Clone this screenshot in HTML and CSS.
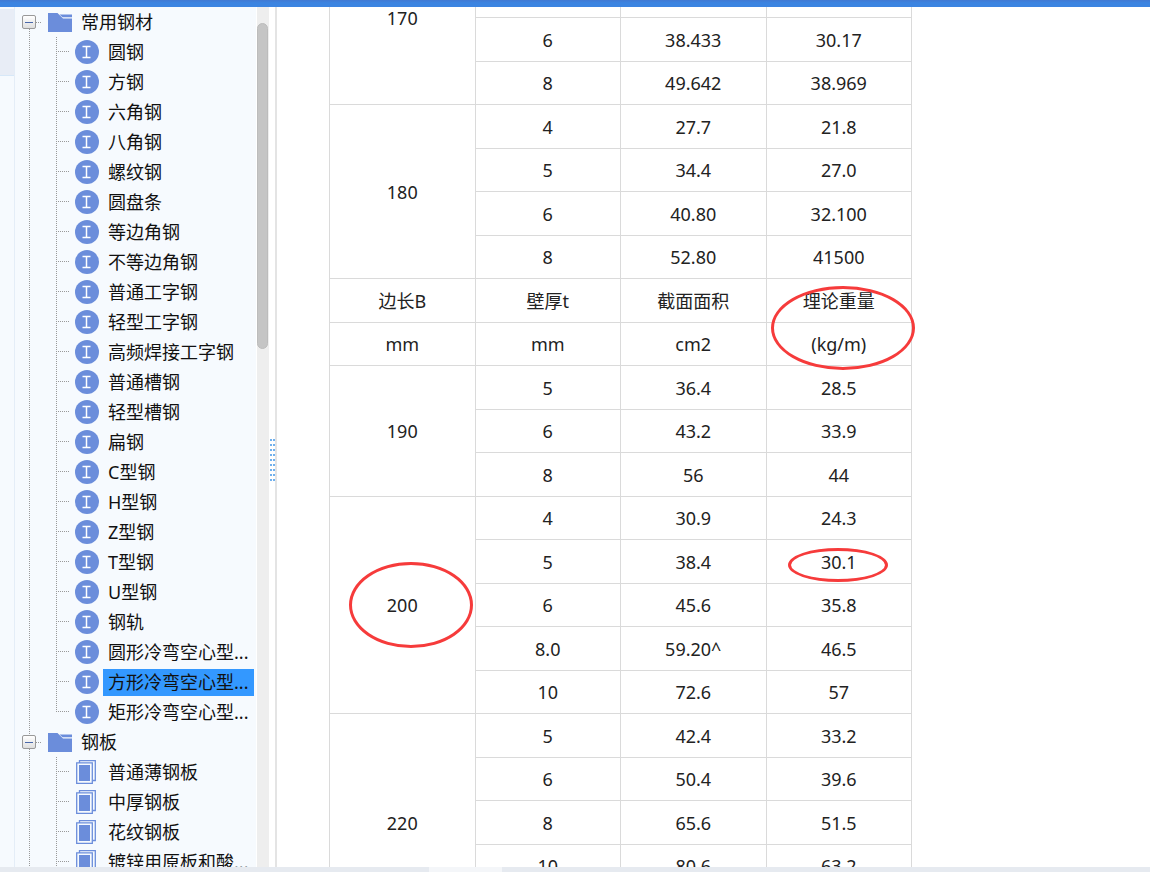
FILE: index.html
```html
<!DOCTYPE html>
<html lang="zh-CN">
<head>
<meta charset="utf-8">
<title>常用钢材</title>
<link rel="stylesheet" href="styles.css">
</head>
<body>
<svg class="defs" aria-hidden="true">
  <symbol id="folder" viewBox="0 0 24 19"><path fill="#6b8ddb" d="M0 0h9.500l5.500 5.500h9V19H0z"/><path fill="#6b8ddb" d="M11.500 1.500H24v2.700h-9.500z"/></symbol>
  <symbol id="beam" viewBox="0 0 24 24"><circle cx="12" cy="12" r="12" fill="#6b8ddb"/><path fill="none" stroke="#fff" stroke-width="1.500" d="M7.500 6.500h8M7.500 17.500h8M11.500 6.500v11"/></symbol>
  <symbol id="plate" viewBox="0 0 24 24"><path fill="none" stroke="#6b8ddb" stroke-width="1.300" d="M4.500 2.500V.7h15.800v19.800H18M1.700 2.800h15.600v20.500H1.700z"/><path fill="#6b8ddb" d="M4 5h11v16H4z"/></symbol>
</svg>
<div class="app">
  <header class="topbar"></header>
  <div class="workspace">
    <aside class="rail"><div class="rail-tab"></div></aside>
    <nav class="tree" aria-label="材料目录">
      <ul class="roots">
        <li class="root">
          <div class="root-row"><button class="toggle" type="button" aria-label="折叠常用钢材"></button><svg class="folder"><use href="#folder"/></svg><span>常用钢材</span></div>
          <ul class="children">
            <li><svg class="icon"><use href="#beam"/></svg><a href="#">圆钢</a></li>
            <li><svg class="icon"><use href="#beam"/></svg><a href="#">方钢</a></li>
            <li><svg class="icon"><use href="#beam"/></svg><a href="#">六角钢</a></li>
            <li><svg class="icon"><use href="#beam"/></svg><a href="#">八角钢</a></li>
            <li><svg class="icon"><use href="#beam"/></svg><a href="#">螺纹钢</a></li>
            <li><svg class="icon"><use href="#beam"/></svg><a href="#">圆盘条</a></li>
            <li><svg class="icon"><use href="#beam"/></svg><a href="#">等边角钢</a></li>
            <li><svg class="icon"><use href="#beam"/></svg><a href="#">不等边角钢</a></li>
            <li><svg class="icon"><use href="#beam"/></svg><a href="#">普通工字钢</a></li>
            <li><svg class="icon"><use href="#beam"/></svg><a href="#">轻型工字钢</a></li>
            <li><svg class="icon"><use href="#beam"/></svg><a href="#">高频焊接工字钢</a></li>
            <li><svg class="icon"><use href="#beam"/></svg><a href="#">普通槽钢</a></li>
            <li><svg class="icon"><use href="#beam"/></svg><a href="#">轻型槽钢</a></li>
            <li><svg class="icon"><use href="#beam"/></svg><a href="#">扁钢</a></li>
            <li><svg class="icon"><use href="#beam"/></svg><a href="#">C型钢</a></li>
            <li><svg class="icon"><use href="#beam"/></svg><a href="#">H型钢</a></li>
            <li><svg class="icon"><use href="#beam"/></svg><a href="#">Z型钢</a></li>
            <li><svg class="icon"><use href="#beam"/></svg><a href="#">T型钢</a></li>
            <li><svg class="icon"><use href="#beam"/></svg><a href="#">U型钢</a></li>
            <li><svg class="icon"><use href="#beam"/></svg><a href="#">钢轨</a></li>
            <li><svg class="icon"><use href="#beam"/></svg><a href="#">圆形冷弯空心型...</a></li>
            <li><svg class="icon"><use href="#beam"/></svg><a href="#" class="selected" aria-current="true">方形冷弯空心型...</a></li>
            <li><svg class="icon"><use href="#beam"/></svg><a href="#">矩形冷弯空心型...</a></li>
          </ul>
        </li>
        <li class="root">
          <div class="root-row"><button class="toggle" type="button" aria-label="折叠钢板"></button><svg class="folder"><use href="#folder"/></svg><span>钢板</span></div>
          <ul class="children">
            <li><svg class="icon"><use href="#plate"/></svg><a href="#">普通薄钢板</a></li>
            <li><svg class="icon"><use href="#plate"/></svg><a href="#">中厚钢板</a></li>
            <li><svg class="icon"><use href="#plate"/></svg><a href="#">花纹钢板</a></li>
            <li><svg class="icon"><use href="#plate"/></svg><a href="#">镀锌用原板和酸...</a></li>
          </ul>
        </li>
      </ul>
    </nav>
    <div class="scrollbar"><div class="thumb"></div></div>
    <div class="splitter"><div class="grip"></div></div>
    <main class="content">
      <div class="sheet">
        <table>
          <tbody>
            <tr><td rowspan="4">170</td><td></td><td></td><td></td></tr>
            <tr><td></td><td></td><td></td></tr>
            <tr><td>6</td><td>38.433</td><td>30.17</td></tr>
            <tr><td>8</td><td>49.642</td><td>38.969</td></tr>
            <tr><td rowspan="4">180</td><td>4</td><td>27.7</td><td>21.8</td></tr>
            <tr><td>5</td><td>34.4</td><td>27.0</td></tr>
            <tr><td>6</td><td>40.80</td><td>32.100</td></tr>
            <tr><td>8</td><td>52.80</td><td>41500</td></tr>
            <tr><th>边长B</th><th>壁厚t</th><th>截面面积</th><th>理论重量</th></tr>
            <tr><th>mm</th><th>mm</th><th>cm2</th><th>(kg/m)</th></tr>
            <tr><td rowspan="3">190</td><td>5</td><td>36.4</td><td>28.5</td></tr>
            <tr><td>6</td><td>43.2</td><td>33.9</td></tr>
            <tr><td>8</td><td>56</td><td>44</td></tr>
            <tr><td rowspan="5">200</td><td>4</td><td>30.9</td><td>24.3</td></tr>
            <tr><td>5</td><td>38.4</td><td>30.1</td></tr>
            <tr><td>6</td><td>45.6</td><td>35.8</td></tr>
            <tr><td>8.0</td><td>59.20^</td><td>46.5</td></tr>
            <tr><td>10</td><td>72.6</td><td>57</td></tr>
            <tr><td rowspan="5">220</td><td>5</td><td>42.4</td><td>33.2</td></tr>
            <tr><td>6</td><td>50.4</td><td>39.6</td></tr>
            <tr><td>8</td><td>65.6</td><td>51.5</td></tr>
            <tr><td>10</td><td>80.6</td><td>63.2</td></tr>
            <tr><td></td><td></td><td></td></tr>
          </tbody>
        </table>
        <div class="mark mark-weight"></div>
        <div class="mark mark-value"></div>
        <div class="mark mark-side"></div>
      </div>
    </main>
  </div>
  <footer class="bottombar"><div class="bottom-tab"></div></footer>
</div>
</body>
</html>
```

FILE: styles.css
```css
* { box-sizing: border-box; }
body {
  margin: 0;
  background: #fff;
  color: #222;
  font: 18px/24px "Noto Sans", "Noto Sans CJK SC", sans-serif;
}
ul { list-style: none; margin: 0; padding: 0; }
.defs { position: absolute; width: 0; height: 0; }
.app { display: flex; flex-direction: column; height: 100vh; overflow: hidden; }
.topbar { flex: none; height: 7px; background: linear-gradient(#4179d2, #3b84e1 3px); }
.workspace { flex: 1; min-height: 0; display: flex; overflow: hidden; }

.rail { flex: none; width: 15px; padding-top: 2px; background: #f6fafe; border-right: 1px solid #e4edf7; }
.rail-tab { height: 67px; background: #e8edf6; border-bottom: 1px solid #d7e8f8; }

.tree { flex: none; width: 241px; overflow: hidden; background: #f6fafe; color: #111; }
.root-row { display: flex; align-items: center; height: 30px; padding-left: 7px; }
.toggle {
  flex: none;
  width: 14px;
  height: 14px;
  padding: 0;
  border: 1px solid #999;
  border-radius: 2px;
  background: linear-gradient(#4a68aa, #4a68aa) center / 8px 1px no-repeat, linear-gradient(#fff, #dedede);
}
.root-row::after {
  content: "";
  order: 1;
  width: 6px;
  height: 1px;
  background: repeating-linear-gradient(90deg, #999 0 1px, transparent 1px 2px);
}
.folder { order: 2; flex: none; width: 24px; height: 19px; margin-left: 6px; }
.root-row span { order: 3; margin-left: 9px; }
.root { background: repeating-linear-gradient(#999 0 1px, transparent 1px 2px) 14px 0 / 1px 100% no-repeat; }
.root:first-child { background-position: 14px 22px; }
.children { padding-left: 41px; }
.children li {
  display: flex;
  align-items: center;
  height: 30px;
  background:
    repeating-linear-gradient(#999 0 1px, transparent 1px 2px) 0 0 / 1px 100% no-repeat,
    repeating-linear-gradient(90deg, #999 0 1px, transparent 1px 2px) 0 14px / 14px 1px no-repeat;
}
.root:first-child .children li:last-child { background-size: 1px 15px, 14px 1px; }
.icon { flex: none; width: 24px; height: 24px; margin-left: 19px; }
.children a {
  margin-left: 4px;
  padding: 0 5px;
  width: 151px;
  height: 27px;
  line-height: 27px;
  white-space: nowrap;
  color: inherit;
  text-decoration: none;
}
.children .selected { background: #3398ff; }

.scrollbar { flex: none; width: 13px; padding: 16px 1px 0 0; background: #eee; border-left: 1px solid #fff; }
.thumb { height: 326px; border-radius: 6px; background: #c5c5c5; border: 1px solid #bcbcbc; }
.splitter { flex: none; width: 8px; display: flex; align-items: center; border-right: 2px solid #e4e4e4; padding-top: 48px; }
.grip {
  width: 6px;
  height: 44px;
  background:
    repeating-linear-gradient(transparent 0 2px, #fff 2px 5px),
    repeating-linear-gradient(90deg, #fff 0 1px, #72b1ed 1px 3px);
}

.content { flex: 1; min-width: 0; overflow: hidden; padding-left: 52px; }
.sheet { position: relative; width: 583px; margin-top: -77px; }
table { width: 100%; table-layout: fixed; border-collapse: collapse; }
tr { height: 44px; }
tr:nth-child(even) { height: 43px; }
th, td { padding: 0; border: 1px solid #dadada; font-weight: 400; text-align: center; vertical-align: middle; }
.mark { position: absolute; border: 3px solid #f63b3b; border-radius: 50%; }
.mark-weight { left: 442px; top: 356px; width: 144px; height: 84px; }
.mark-value { left: 459px; top: 618px; width: 100px; height: 34px; }
.mark-side { left: 20px; top: 632px; width: 124px; height: 86px; }

.bottombar { flex: none; height: 5px; padding-left: 429px; background: #e6eaf0; }
.bottom-tab { width: 73px; height: 5px; background: #f4f6f9; }
```
